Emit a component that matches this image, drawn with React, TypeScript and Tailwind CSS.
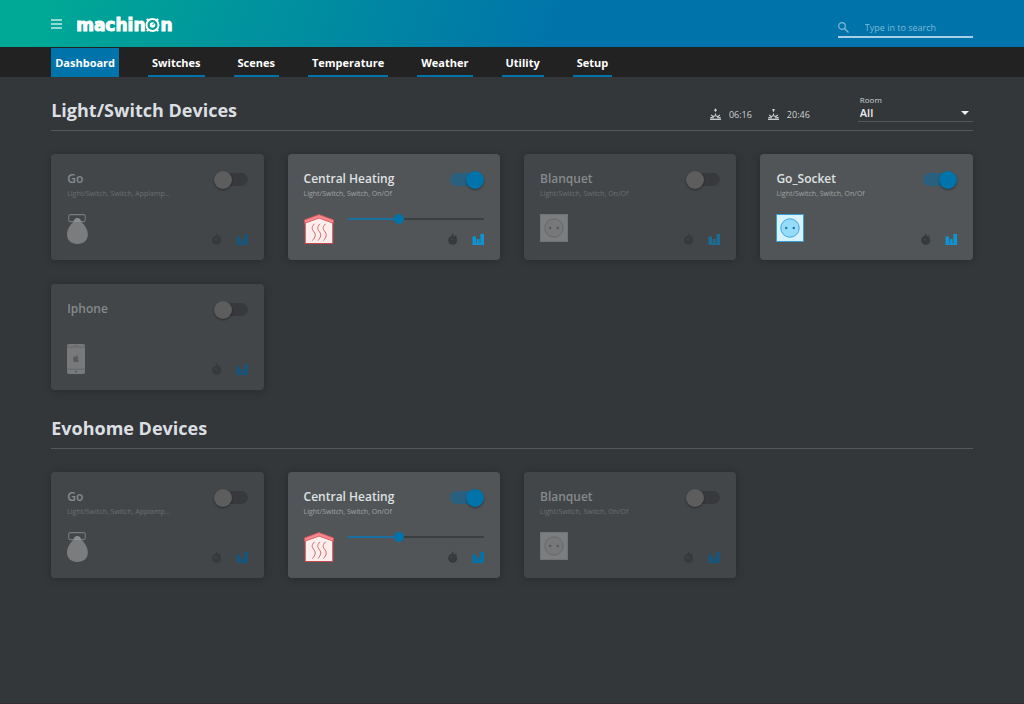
import { useId, useState } from "react";
import type { ReactNode } from "react";

type IconKind = "bulb" | "heating" | "socket" | "phone";

interface Device {
  name: string;
  details?: string;
  icon: IconKind;
  on?: boolean;
  level?: number;
  chart: string;
}

const switches: Device[] = [
  { name: "Go", details: "Light/Switch, Switch, Applamp...", icon: "bulb", chart: "text-[#17567a]" },
  { name: "Central Heating", details: "Light/Switch, Switch, On/Of", icon: "heating", on: true, level: 37, chart: "text-[#0f93d2]" },
  { name: "Blanquet", details: "Light/Switch, Switch, On/Of", icon: "socket", chart: "text-[#1b6b92]" },
  { name: "Go_Socket", details: "Light/Switch, Switch, On/Of", icon: "socket", on: true, chart: "text-[#0f93d2]" },
  { name: "Iphone", icon: "phone", chart: "text-[#17567a]" },
];

const evohome: Device[] = [
  { name: "Go", details: "Light/Switch, Switch, Applamp...", icon: "bulb", chart: "text-[#17567a]" },
  { name: "Central Heating", details: "Light/Switch, Switch, On/Of", icon: "heating", on: true, level: 37, chart: "text-[#0073aa]" },
  { name: "Blanquet", details: "Light/Switch, Switch, On/Of", icon: "socket", chart: "text-[#17567a]" },
];

const pages = ["Dashboard", "Switches", "Scenes", "Temperature", "Weather", "Utility", "Setup"];

function BulbIcon() {
  return (
    <svg width="21" height="30" viewBox="0 0 21 30" aria-hidden="true">
      <rect x="1.7" y="0.6" width="16.6" height="7" rx="1.8" fill="none" stroke="#77797b" strokeWidth="1.1" />
      <path d="M6.3 8.2C6.8 5.6 8.2 4 10.3 4s3.6 1.600 4.100 4.200z" fill="#8b8c8e" />
      <path d="M6.400 8h8c3.600 3 6.400 8 6.400 12.300C20.800 26.500 16.500 30 10.400 30S0 26.500 0 20.300C0 16 2.800 11 6.400 8z" fill="#7b7c7e" />
    </svg>
  );
}

function HeatingIcon() {
  return (
    <svg width="30" height="30" viewBox="0 0 30 30" aria-hidden="true">
      <path d="M1.200 7.500L15 2.500l13.800 5v22H1.200z" fill="#fdeeee" stroke="#c9474c" strokeWidth="1" />
      <path d="M0.500 5.900L15 0.600l14.500 5.300v3.400L15 4.100 0.500 9.300z" fill="#f58a8c" stroke="#d8545a" strokeWidth="0.900" />
      <g fill="none" stroke="#d4686c" strokeWidth="1">
        <path d="M10.500 9.800c-3.600 3.800-2.400 5.600-.4 8.200s1.400 5-1.700 8.600" />
        <path d="M16 9.800c-3.600 3.800-2.400 5.600-.4 8.200s1.400 5-1.700 8.600" />
        <path d="M21.500 9.800c-3.600 3.800-2.400 5.600-.4 8.200s1.400 5-1.700 8.600" />
      </g>
    </svg>
  );
}

function SocketIcon({ on }: { on?: boolean }) {
  const edge = on ? "#3fa3d6" : "#68696b";
  return (
    <svg width="28" height="28" viewBox="0 0 28 28" aria-hidden="true">
      <rect x="0.500" y="0.500" width="27" height="27" fill={on ? "#d6f2fd" : "#7c7d7f"} stroke={on ? "#3a9dd2" : "#727375"} />
      <circle cx="14" cy="14" r="9.200" fill={on ? "#96dbf8" : "#777879"} stroke={edge} />
      <circle cx="10.200" cy="14" r="1.200" fill={on ? "#1878b0" : "#55575a"} />
      <circle cx="17.800" cy="14" r="1.200" fill={on ? "#1878b0" : "#55575a"} />
    </svg>
  );
}

function PhoneIcon() {
  return (
    <svg width="18" height="30" viewBox="0 0 18 30" aria-hidden="true">
      <rect width="18" height="30" rx="1.800" fill="#78797b" />
      <path d="M0 3h18M0 25.200h18" stroke="#5c5e60" strokeWidth="0.700" />
      <path d="M7.300 1.500h3.400" stroke="#5c5e60" strokeWidth="0.600" />
      <circle cx="9" cy="27.600" r="0.900" fill="#505254" />
      <path d="M8.900 12.800c-.7-.4-2.900-.6-2.900 2.100 0 1.800 1.200 3.300 2 3.300.4 0 .6-.2 1-.2s.6.200 1 .2c.8 0 1.600-1.100 1.800-1.900-1.300-.6-1.300-2.400-.1-3-.7-.9-2-.9-2.800-.5zM9 12.400c0-1 .7-1.700 1.500-1.800.1 1-.6 1.800-1.500 1.800z" fill="#595a5c" />
    </svg>
  );
}

function DeviceIcon({ kind, on }: { kind: IconKind; on?: boolean }) {
  if (kind === "bulb") return <BulbIcon />;
  if (kind === "heating") return <HeatingIcon />;
  if (kind === "socket") return <SocketIcon on={on} />;
  return <PhoneIcon />;
}

function TimerIcon() {
  return (
    <svg width="10" height="12" viewBox="0 0 10 12" fill="#37393b" aria-hidden="true">
      <circle cx="4.700" cy="7.200" r="4.500" />
      <path d="M3.900 0.800h1.600v2H3.900zM7.900 2l1 .9-1 1.100L7 3z" />
      <path d="M4.700 7.200L3.200 5.700" stroke="#5c5e60" strokeWidth="0.700" />
    </svg>
  );
}

function ChartIcon() {
  return (
    <svg width="12" height="12" viewBox="0 0 12 12" fill="currentColor" aria-hidden="true">
      <path d="M0.500 3.500H4v8.500H0.500zM4.700 6h2.900v6H4.700zM8.400 1H12v11H8.400zM0.500 10.300H12V12H0.500z" />
    </svg>
  );
}

function SunIcon({ down }: { down?: boolean }) {
  return (
    <svg width="11" height="12" viewBox="0 0 11 12" fill="none" stroke="#d0d2d3" aria-hidden="true" className="mb-[2px]">
      <path d="M0 11.300h11" strokeWidth="1.300" />
      <path d="M2.900 10.400a2.600 2.600 0 0 1 5.200 0M1.200 6.800l1.700 1.700M9.800 6.800L8.100 8.500M0.400 9.600h1.800M10.600 9.600H8.800" strokeWidth="1.100" />
      <path d="M5.500 1v2.800M5.500 5.600v2" strokeWidth="1.100" />
      <path d={down ? "M3.900 1.200h3.200L5.500 3.800z" : "M3.800 2.800h3.400L5.500 0.200z"} fill="#d0d2d3" stroke="none" />
    </svg>
  );
}

function Logo() {
  return (
    <a
      href="#home"
      className="mt-[2px] flex items-center font-['DejaVu_Sans',sans-serif] text-[17px] leading-5 font-bold text-white [-webkit-text-stroke:1px_white]"
    >
      machin
      <svg width="15" height="16" viewBox="0 0 15 16" aria-label="o">
        <path d="M1.800 2l1.700 1.500M13.200 2l-1.700 1.500M1.800 14l1.700-1.500M13.200 14l-1.700-1.500" stroke="#fff" strokeWidth="2.200" />
        <circle cx="7.500" cy="8" r="6" fill="none" stroke="#fff" strokeWidth="2" />
        <circle cx="7.500" cy="8" r="2.800" fill="#fff" />
        <path d="M7.500 8l2.800-2.800" stroke="#0a95a0" strokeWidth="1" />
      </svg>
      n
    </a>
  );
}

function DeviceCard({ device }: { device: Device }) {
  const id = useId();
  const [on, setOn] = useState(Boolean(device.on));
  const [level, setLevel] = useState(device.level ?? 0);
  return (
    <article
      className={`flex h-[106px] flex-col justify-between rounded-[4px] px-4 pt-4 pb-[15px] shadow-[0_1px_8px_rgba(0,0,0,0.22)] ${on ? "bg-[#525557]" : "bg-[#434649]"}`}
    >
      <div className="flex justify-between">
        <div>
          <label htmlFor={id} className={`block text-[12px] leading-[18px] font-semibold ${on ? "text-[#dfe2e4]" : "text-[#868a8c]"}`}>
            {device.name}
          </label>
          <p className={`text-[7px] leading-3 ${on ? "text-[#a0a2a4]" : "text-[#6b6e70]"}`}>{device.details}</p>
        </div>
        <input
          id={id}
          type="checkbox"
          checked={on}
          onChange={(e) => setOn(e.target.checked)}
          className="mt-[3px] flex h-[13px] w-[34px] shrink-0 appearance-none items-center rounded-full bg-[#38393c] before:size-[18px] before:shrink-0 before:rounded-full before:bg-[#5d5d5d] before:shadow-[0_1px_2px_rgba(0,0,0,0.4)] checked:justify-end checked:bg-[#2a607f] checked:before:bg-[#0073aa]"
        />
      </div>
      <div className="flex h-[31px] items-stretch gap-[14px]">
        <div>
          <DeviceIcon kind={device.icon} on={on} />
        </div>
        <div className="flex flex-1 flex-col justify-between">
          <div className="h-[10px]">
            {device.level !== undefined && (
              <input
                type="range"
                aria-label={`${device.name} level`}
                value={level}
                onChange={(e) => setLevel(Number(e.target.value))}
                style={{ backgroundImage: `linear-gradient(to right, #1a6fa3 ${level}%, #3c3f41 ${level}%)` }}
                className="block h-[10px] w-full appearance-none bg-[length:100%_2px] bg-center bg-no-repeat [&::-webkit-slider-thumb]:size-[10px] [&::-webkit-slider-thumb]:appearance-none [&::-webkit-slider-thumb]:rounded-full [&::-webkit-slider-thumb]:bg-[#0073aa]"
              />
            )}
          </div>
          <div className="flex justify-end gap-[14px]">
            <button type="button" aria-label="Timers">
              <TimerIcon />
            </button>
            <button type="button" aria-label="Log" className={device.chart}>
              <ChartIcon />
            </button>
          </div>
        </div>
      </div>
    </article>
  );
}

function Section({ title, devices, children }: { title: string; devices: Device[]; children?: ReactNode }) {
  return (
    <section>
      <div className="flex h-[54px] items-end justify-between border-b border-[#56595b] pb-2">
        <h2 className="text-[18px] leading-6 font-bold text-[#dcdfe2]">{title}</h2>
        {children}
      </div>
      <div className="mt-[23px] grid grid-cols-4 gap-6">
        {devices.map((d) => (
          <DeviceCard key={d.name} device={d} />
        ))}
      </div>
    </section>
  );
}

export default function App() {
  return (
    <div className="min-h-screen border-b border-[#332c30] bg-[#33373a] font-['Open_Sans',sans-serif]">
      <header className="flex h-12 items-center justify-between border-b border-[#222] bg-[linear-gradient(110deg,#00a896_5%,#0073aa_55%)] px-[5%]">
        <div className="flex items-center gap-[14px]">
          <button type="button" aria-label="Menu">
            <svg width="11" height="10" viewBox="0 0 11 10" aria-hidden="true">
              <path d="M0 1h11M0 5h11M0 9h11" stroke="#c3ebe7" strokeWidth="1.600" />
            </svg>
          </button>
          <Logo />
        </div>
        <label className="mt-[10px] flex w-[135px] items-center gap-4 border-b-2 border-[#a9cfe4]">
          <svg width="11" height="11" viewBox="0 0 11 11" fill="none" stroke="#7fb9d8" strokeWidth="1.200" aria-hidden="true" className="shrink-0">
            <circle cx="4" cy="4" r="3.300" />
            <path d="M6.500 6.500L10.500 10.500" />
          </svg>
          <input
            type="search"
            aria-label="Search"
            placeholder="Type in to search"
            className="w-full min-w-0 bg-transparent text-[9px] leading-4 text-white outline-none placeholder:text-[#7fb9d8]"
          />
        </label>
      </header>
      <nav className="flex h-[29px] gap-[29px] bg-[#222] px-[5%]">
        {pages.map((page, i) => (
          <a
            key={page}
            href={`#${page.toLowerCase()}`}
            aria-current={i === 0 ? "page" : undefined}
            className={`flex items-center border-b-2 border-[#0073aa] px-1 pt-1 text-[11px] font-bold text-white ${i === 0 ? "bg-[#0073aa]" : ""}`}
          >
            {page}
          </a>
        ))}
      </nav>
      <main className="flex flex-col gap-[5px] px-[5%]">
        <Section title="Light/Switch Devices" devices={switches}>
          <div className="flex items-end text-[#d0d2d3]">
            <div className="flex items-center gap-2 text-[9px] leading-[14px]">
              <SunIcon />
              <span>06:16</span>
              <span className="ml-2">
                <SunIcon down />
              </span>
              <span>20:46</span>
            </div>
            <label className="ml-12 w-[115px] border-b border-[#56595b] pl-[2px] text-[8px] leading-[10px]">
              Room
              <span className="flex items-center pr-1">
                <select className="flex-1 appearance-none bg-transparent text-[11px] leading-4 font-semibold text-[#eceeef] outline-none">
                  <option>All</option>
                </select>
                <svg width="8" height="4" viewBox="0 0 8 4" fill="#eceeef" aria-hidden="true">
                  <path d="M0 0h8L4 4z" />
                </svg>
              </span>
            </label>
          </div>
        </Section>
        <Section title="Evohome Devices" devices={evohome} />
      </main>
    </div>
  );
}
